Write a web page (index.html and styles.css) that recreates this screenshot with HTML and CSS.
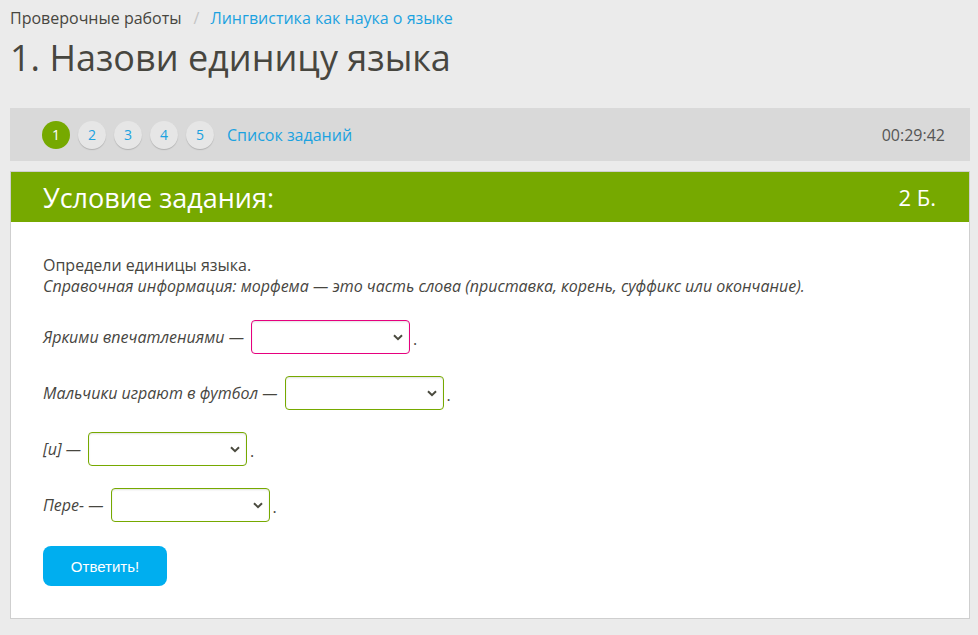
FILE: index.html
```html
<!DOCTYPE html>
<html lang="ru">
<head>
<meta charset="utf-8">
<title>1. Назови единицу языка</title>
<link rel="stylesheet" href="styles.css">
</head>
<body>
<div class="page">
  <nav class="crumbs">
    <span class="crumb">Проверочные работы</span>
    <span class="sep">/</span>
    <a class="crumb-link" href="#">Лингвистика как наука о языке</a>
  </nav>
  <h1 class="title">1. Назови единицу языка</h1>

  <div class="navbar">
    <div class="steps">
      <span class="step active">1</span>
      <span class="step">2</span>
      <span class="step">3</span>
      <span class="step">4</span>
      <span class="step">5</span>
      <a class="list-link" href="#">Список заданий</a>
    </div>
    <div class="timer">00:29:42</div>
  </div>

  <div class="card">
    <div class="card-head">
      <span class="card-title">Условие задания:</span>
      <span class="card-score">2 Б.</span>
    </div>
    <div class="card-body">
      <p class="intro">Определи единицы языка.<br><em>Справочная информация: морфема — это часть слова (приставка, корень, суффикс или окончание).</em></p>

      <div class="row"><em>Яркими впечатлениями —</em><span class="sel wrong"><select><option></option></select></span><span class="dot">.</span></div>
      <div class="row"><em>Мальчики играют в футбол —</em><span class="sel"><select><option></option></select></span><span class="dot">.</span></div>
      <div class="row"><em>[и] —</em><span class="sel"><select><option></option></select></span><span class="dot">.</span></div>
      <div class="row"><em>Пере- —</em><span class="sel"><select><option></option></select></span><span class="dot">.</span></div>

      <button class="submit" type="button">Ответить!</button>
    </div>
  </div>
</div>
</body>
</html>
```

FILE: styles.css
```css
html, body {
  margin: 0;
  padding: 0;
  background: #ebebeb;
}
body {
  font-family: "Open Sans", "Noto Sans", sans-serif;
  color: #47463f;
}
.page {
  padding: 8px 8px 16px 10px;
}
.crumbs {
  font-size: 16px;
  line-height: 20px;
  height: 20px;
  display: flex;
  align-items: center;
}
.crumb { color: #47463f; }
.sep {
  color: #c4c4c4;
  margin: 0 11px 0 12px;
}
.crumb-link {
  color: #1ba2e0;
  text-decoration: none;
}
.title {
  margin: 8px 0 0 0;
  font-size: 36px;
  font-weight: 400;
  line-height: 44px;
  color: #47463f;
}
.navbar {
  margin-top: 28px;
  height: 53px;
  background: #d9d9d9;
  display: flex;
  align-items: center;
  justify-content: space-between;
  padding: 0 25px 0 32px;
}
.steps {
  display: flex;
  align-items: center;
  gap: 8px;
}
.step {
  width: 28px;
  height: 28px;
  border-radius: 50%;
  background: #e6e6e6;
  box-shadow: 0 1px 1px rgba(0,0,0,0.18);
  color: #1ba2e0;
  font-size: 14px;
  display: flex;
  align-items: center;
  justify-content: center;
}
.step.active {
  background: #76a900;
  color: #fff;
  box-shadow: none;
}
.list-link {
  margin-left: 5px;
  color: #1ba2e0;
  font-size: 16px;
  text-decoration: none;
}
.timer {
  font-size: 16px;
  color: #555;
}
.card {
  margin-top: 10px;
  border: 1px solid #cfcfcf;
  background: #fff;
}
.card-head {
  background: #76a900;
  height: 50px;
  display: flex;
  align-items: center;
  justify-content: space-between;
  padding: 0 33px 0 32px;
  color: #fff;
}
.card-title {
  font-size: 27px;
}
.card-score {
  font-size: 22px;
}
.card-body {
  padding: 33px 32px 32px 32px;
}
.intro {
  margin: 0;
  font-size: 16px;
  line-height: 21px;
}
.row {
  display: flex;
  align-items: center;
  height: 34px;
  margin-top: 22px;
  font-size: 16px;
}
.intro + .row { margin-top: 23px; }
.sel {
  margin-left: 7px;
  width: 159px;
  height: 34px;
}
.sel select {
  appearance: none;
  -webkit-appearance: none;
  width: 159px;
  height: 34px;
  box-sizing: border-box;
  border: 1px solid #76a900;
  border-radius: 4px;
  background: #fff url("data:image/svg+xml;utf8,<svg xmlns='http://www.w3.org/2000/svg' width='10' height='7' viewBox='0 0 10 7'><path d='M1 1.2 L5 5.2 L9 1.2' fill='none' stroke='%234b4b3f' stroke-width='2'/></svg>") no-repeat right 6px center;
  box-shadow: inset 0 1px 2px rgba(0,0,0,0.12);
  outline: none;
  margin: 0;
}
.sel.wrong select {
  border-color: #e6007e;
}
.dot {
  margin-left: 3px;
  padding-top: 4px;
  color: #47463f;
}
.submit {
  margin-top: 24px;
  width: 124px;
  height: 40px;
  border: none;
  border-radius: 8px;
  background: #00aeef;
  color: #fff;
  font-family: "Liberation Sans", Arial, sans-serif;
  font-size: 15px;
  cursor: pointer;
}
```
